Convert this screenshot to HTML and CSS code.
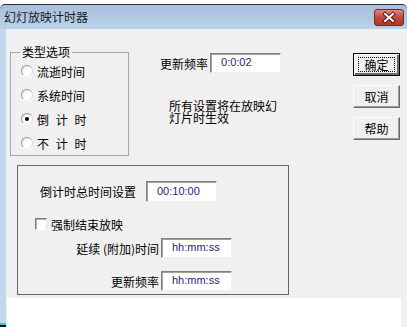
FILE: index.html
```html
<!DOCTYPE html>
<html>
	<head>
		<meta charset="utf-8">
		<title>幻灯放映计时器</title>
		<link rel="stylesheet" href="styles.css">
	</head>
	<body>
		<div class="window">
			<div class="titlebar">
				<span class="title">幻灯放映计时器</span>
				<span class="close">
					<svg width="30" height="17" viewBox="0 0 30 17">
						<path d="M11 5 L19 12 M19 5 L11 12" stroke="#5a1a14" stroke-width="4" stroke-linecap="square"/>
						<path d="M11 5 L19 12 M19 5 L11 12" stroke="#ffffff" stroke-width="2" stroke-linecap="square"/>
					</svg>
				</span>
			</div>
			<div class="frame">
				<div class="edge"></div>
				<div class="client">
					<div class="top">
						<fieldset class="types">
							<legend>类型选项</legend>
							<label class="radio"><span class="circle"></span>流逝时间</label>
							<label class="radio"><span class="circle"></span>系统时间</label>
							<label class="radio"><span class="circle checked"></span>倒 计 时</label>
							<label class="radio"><span class="circle"></span>不 计 时</label>
						</fieldset>
						<div class="middle">
							<div class="field">
								<span class="label">更新频率</span>
								<span class="edit">0:0:02</span>
							</div>
							<p class="note">所有设置将在放映幻灯片时生效</p>
						</div>
						<div class="buttons">
							<button type="button" class="btn default"><span class="focus">确定</span></button>
							<button type="button" class="btn">取消</button>
							<button type="button" class="btn">帮助</button>
						</div>
					</div>
					<div class="countdown">
						<div class="row first">
							<span class="label total">倒计时总时间设置</span>
							<span class="edit">00:10:00</span>
						</div>
						<label class="check"><span class="box"></span>强制结束放映</label>
						<div class="row sub">
							<span class="label right">延续 (附加)时间</span>
							<span class="edit hint">hh:mm:ss</span>
						</div>
						<div class="row sub last">
							<span class="label right">更新频率</span>
							<span class="edit hint">hh:mm:ss</span>
						</div>
					</div>
					<div class="blank"></div>
				</div>
			</div>
		</div>
	</body>
</html>
```

FILE: styles.css
```css
*{
	margin: 0;
	padding: 0;
	box-sizing: border-box;
}
body{
	width: 407px;
	height: 327px;
	overflow: hidden;
	background-color: #ffffff;
	font-family: "Noto Sans CJK SC", "Liberation Sans", sans-serif;
	font-size: 12px;
	color: #000000;
}
.window{
	padding-top: 4px;
}
.titlebar{
	height: 25px;
	display: flex;
	align-items: center;
	border-top: 1px solid #2e2e2e;
	border-radius: 5px 5px 0 0;
	background: linear-gradient(#a6bfdb, #bad1ea);
}
.title{
	padding-left: 4px;
	font-size: 12px;
	color: #1b1b1b;
	line-height: 14px;
}
.close{
	margin-left: auto;
	margin-right: 3px;
	width: 30px;
	height: 17px;
	border: 1px solid #6a2a26;
	border-radius: 3px;
	background: linear-gradient(#dd8a80, #c2493c 50%, #b3362a);
	display: flex;
}
.close svg{
	margin: -1px;
}
.frame{
	display: flex;
}
.edge{
	width: 6px;
	background: linear-gradient(#c2d8ef, #c2d8ef calc(100% - 5px), #3ec3e6 calc(100% - 5px), #3ec3e6 calc(100% - 3px), #111 calc(100% - 3px));
}
.client{
	flex: 1;
	background-color: #f0f0f0;
}
.top{
	display: flex;
	align-items: flex-start;
	padding-top: 16px;
}

/* 类型选项 */
.types{
	margin-left: 4px;
	width: 119px;
	border: 1px solid #a8a8a8;
	padding: 0 0 0 10px;
}
.types legend{
	margin-left: -1px;
	padding: 0 2px;
	line-height: 14px;
}
.radio{
	display: flex;
	align-items: center;
	height: 24px;
	gap: 4px;
	word-spacing: 4px;
}
.circle{
	width: 12px;
	height: 12px;
	border-radius: 50%;
	border: 1px solid;
	border-color: #9a9a9a #dcdcdc #f4f4f4 #9a9a9a;
	background: radial-gradient(circle at 65% 65%, #ffffff 40%, #e4e4e4);
	display: flex;
	align-items: center;
	justify-content: center;
}
.circle.checked::after{
	content: "";
	width: 4px;
	height: 4px;
	border-radius: 50%;
	background-color: #000000;
}

/* 中间 */
.middle{
	margin-left: 31px;
	margin-top: 8px;
}
.field{
	display: flex;
	align-items: center;
	gap: 2px;
}
.edit{
	display: block;
	width: 71px;
	height: 20px;
	line-height: 17px;
	padding-left: 10px;
	background-color: #ffffff;
	border: 1px solid;
	border-color: #828282 #f0f0f0 #f0f0f0 #828282;
	box-shadow: inset 1px 1px 0 #a0a0a0;
	font-family: "Liberation Sans", sans-serif;
	font-size: 11px;
	color: #1e1e78;
}
.note{
	width: 110px;
	margin: 27px 0 0 9px;
	line-height: 12px;
}

/* 按钮 */
.buttons{
	margin-left: auto;
	margin-right: 7px;
	margin-top: 8px;
	display: flex;
	flex-direction: column;
	gap: 9px;
}
.btn{
	width: 47px;
	height: 23px;
	font-family: "Noto Sans CJK SC", sans-serif;
	font-size: 12px;
	background-color: #f0f0f0;
	border: 1px solid;
	border-color: #ffffff #696969 #696969 #ffffff;
	box-shadow: inset -1px -1px 0 #a0a0a0;
	display: flex;
	align-items: center;
	justify-content: center;
}
.btn.default{
	border: 1px solid #000000;
	box-shadow: inset 1px 1px 0 #ffffff, inset -2px -2px 0 #696969;
}
.focus{
	width: 37px;
	height: 15px;
	line-height: 13px;
	border: 1px dotted #000000;
	text-align: center;
}

/* 倒计时 */
.countdown{
	margin: 9px 0 0 11px;
	width: 272px;
	border: 1px solid #646464;
	padding: 15px 0 3px 0;
}
.row{
	display: flex;
	align-items: center;
}
.total{
	margin-left: 22px;
	width: 106px;
}
.row.first .edit{
	height: 21px;
	line-height: 18px;
}
.check{
	display: flex;
	align-items: center;
	gap: 4px;
	height: 16px;
	margin: 14px 0 0 17px;
}
.box{
	width: 12px;
	height: 12px;
	background-color: #ffffff;
	border: 1px solid;
	border-color: #7a7a7a #e8e8e8 #ffffff #7a7a7a;
	box-shadow: inset 1px 1px 0 #b4b4b4;
}
.row.sub{
	margin-top: 6px;
	gap: 2px;
}
.row.sub.last{
	margin-top: 13px;
}
.right{
	width: 141px;
	text-align: right;
}
.blank{
	margin: 3px 6px 0 1px;
	height: 30px;
	background-color: #ffffff;
}
```
